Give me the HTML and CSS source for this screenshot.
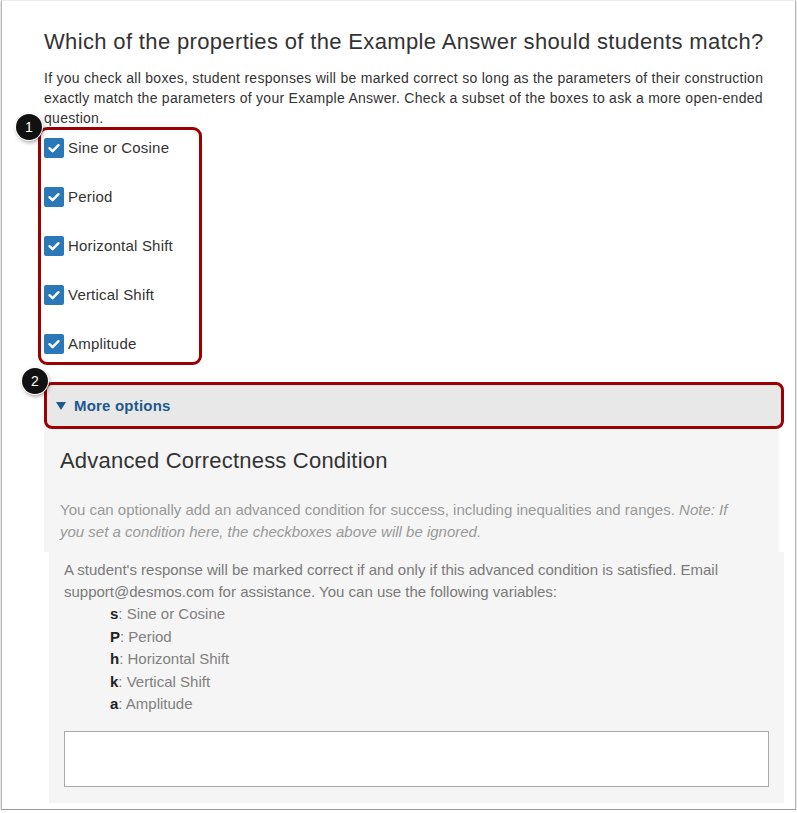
FILE: index.html
```html
<!DOCTYPE html>
<html>
<head>
<meta charset="utf-8">
<link rel="stylesheet" href="styles.css">
</head>
<body>
<div class="frame">
  <div class="content">
    <h2 class="title">Which of the properties of the Example Answer should students match?</h2>
    <p class="intro">If you check all boxes, student responses will be marked correct so long as the parameters of their construction exactly match the parameters of your Example Answer. Check a subset of the boxes to ask a more open-ended question.</p>

    <div class="checks">
      <span class="badge badge-1">1</span>
      <div class="check"><span class="box"><svg viewBox="0 0 20 20" width="20" height="20"><path d="M5.5 10.2 L8.6 13.2 L14.5 7.2" fill="none" stroke="#fff" stroke-width="2.4" stroke-linecap="round" stroke-linejoin="round"/></svg></span><span class="label">Sine or Cosine</span></div>
      <div class="check"><span class="box"><svg viewBox="0 0 20 20" width="20" height="20"><path d="M5.5 10.2 L8.6 13.2 L14.5 7.2" fill="none" stroke="#fff" stroke-width="2.4" stroke-linecap="round" stroke-linejoin="round"/></svg></span><span class="label">Period</span></div>
      <div class="check"><span class="box"><svg viewBox="0 0 20 20" width="20" height="20"><path d="M5.5 10.2 L8.6 13.2 L14.5 7.2" fill="none" stroke="#fff" stroke-width="2.4" stroke-linecap="round" stroke-linejoin="round"/></svg></span><span class="label">Horizontal Shift</span></div>
      <div class="check"><span class="box"><svg viewBox="0 0 20 20" width="20" height="20"><path d="M5.5 10.2 L8.6 13.2 L14.5 7.2" fill="none" stroke="#fff" stroke-width="2.4" stroke-linecap="round" stroke-linejoin="round"/></svg></span><span class="label">Vertical Shift</span></div>
      <div class="check"><span class="box"><svg viewBox="0 0 20 20" width="20" height="20"><path d="M5.5 10.2 L8.6 13.2 L14.5 7.2" fill="none" stroke="#fff" stroke-width="2.4" stroke-linecap="round" stroke-linejoin="round"/></svg></span><span class="label">Amplitude</span></div>
    </div>

    <div class="more">
      <span class="badge badge-2">2</span>
      <svg class="tri" viewBox="0 0 10 8" width="10" height="8"><path d="M0 0 L10 0 L5 8 Z" fill="#1d5a8c"/></svg>
      <span class="more-label">More options</span>
    </div>

    <div class="panel panel-a">
      <h3 class="panel-title">Advanced Correctness Condition</h3>
      <p class="light">You can optionally add an advanced condition for success, including inequalities and ranges. <em>Note: If you set a condition here, the checkboxes above will be ignored.</em></p>
    </div>
    <div class="panel panel-b">
      <p class="light dark">A student's response will be marked correct if and only if this advanced condition is satisfied. Email support@desmos.com for assistance. You can use the following variables:</p>
      <ul class="vars">
        <li><b>s</b>: Sine or Cosine</li>
        <li><b>P</b>: Period</li>
        <li><b>h</b>: Horizontal Shift</li>
        <li><b>k</b>: Vertical Shift</li>
        <li><b>a</b>: Amplitude</li>
      </ul>
      <div class="field"></div>
    </div>
  </div>
</div>
</body>
</html>
```

FILE: styles.css
```css
html, body {
  margin: 0;
  padding: 0;
  background: #fff;
}
body {
  font-family: "Liberation Sans", Arial, sans-serif;
  color: #333;
}
.frame {
  margin-left: 1px;
  width: 793px;
  height: 808px;
  border-top: 1px solid #ececec;
  border-left: 1px solid #b5b5b5;
  border-right: 1px solid #b5b5b5;
  border-bottom: 1px solid #999;
  box-shadow: 0 1px 3px rgba(0,0,0,0.25);
  overflow: hidden;
}
.content {
  padding-left: 42px;
  width: 740px;
}
.title {
  margin: 28px 0 13px;
  font-size: 22px;
  line-height: 26px;
  letter-spacing: 0.35px;
  font-weight: normal;
  color: #333;
}
.intro {
  margin: 0;
  font-size: 14px;
  line-height: 20px;
  letter-spacing: 0.28px;
  color: #333;
}
.checks {
  position: relative;
  margin: -1px 0 0 -6px;
  width: 155px;
  border: 3px solid #9c0000;
  border-radius: 9px;
  padding: 8px 0 8px 3px;
  display: flex;
  flex-direction: column;
  gap: 29px;
}
.check {
  display: flex;
  align-items: center;
  height: 20px;
}
.box {
  width: 20px;
  height: 20px;
  border-radius: 2px;
  background: #2a78b8;
  display: flex;
}
.label {
  margin-left: 4px;
  font-size: 15px;
  line-height: 20px;
  letter-spacing: 0.2px;
  color: #333;
}
.badge {
  position: absolute;
  width: 26px;
  height: 26px;
  border-radius: 50%;
  background: #111;
  color: #fff;
  font-size: 14px;
  line-height: 26px;
  text-align: center;
  box-shadow: 0 0 0 1px #fff, 1px 2px 4px rgba(0,0,0,0.45);
}
.badge-1 {
  left: -25px;
  top: -16px;
}
.more {
  position: relative;
  margin-top: 17px;
  height: 41px;
  border: 3px solid #9c0000;
  border-radius: 8px;
  background: #e8e8e8;
  display: flex;
  align-items: center;
  padding-left: 9px;
  box-sizing: content-box;
  width: 725px;
}
.badge-2 {
  left: -25px;
  top: -17px;
}
.tri {
  display: block;
  margin-top: 1px;
}
.more-label {
  margin-left: 8px;
  font-size: 15px;
  font-weight: bold;
  letter-spacing: 0.2px;
  color: #1d5a8c;
}
.panel {
  background: #f5f5f5;
}
.panel-a {
  width: 719px;
  height: 123px;
  padding: 0 0 0 16px;
  overflow: hidden;
}
.panel-title {
  margin: 19px 0 0;
  font-size: 22px;
  line-height: 26px;
  letter-spacing: 0.2px;
  font-weight: normal;
  color: #333;
}
.light {
  margin: 25px 0 0;
  font-size: 15px;
  line-height: 22px;
  color: #999;
  width: 690px;
}
.panel-b {
  margin-left: 5px;
  width: 720px;
  padding: 7px 0 16px 15px;
}
.dark {
  margin: 0;
  color: #7a7a7a;
  width: 670px;
}
.vars {
  list-style: none;
  margin: 0;
  padding: 0 0 0 46px;
  font-size: 15px;
  line-height: 22.5px;
  color: #808080;
}
.vars b {
  color: #222;
}
.field {
  margin-top: 15px;
  width: 703px;
  height: 54px;
  background: #fff;
  border: 1px solid #aaa;
}
```
